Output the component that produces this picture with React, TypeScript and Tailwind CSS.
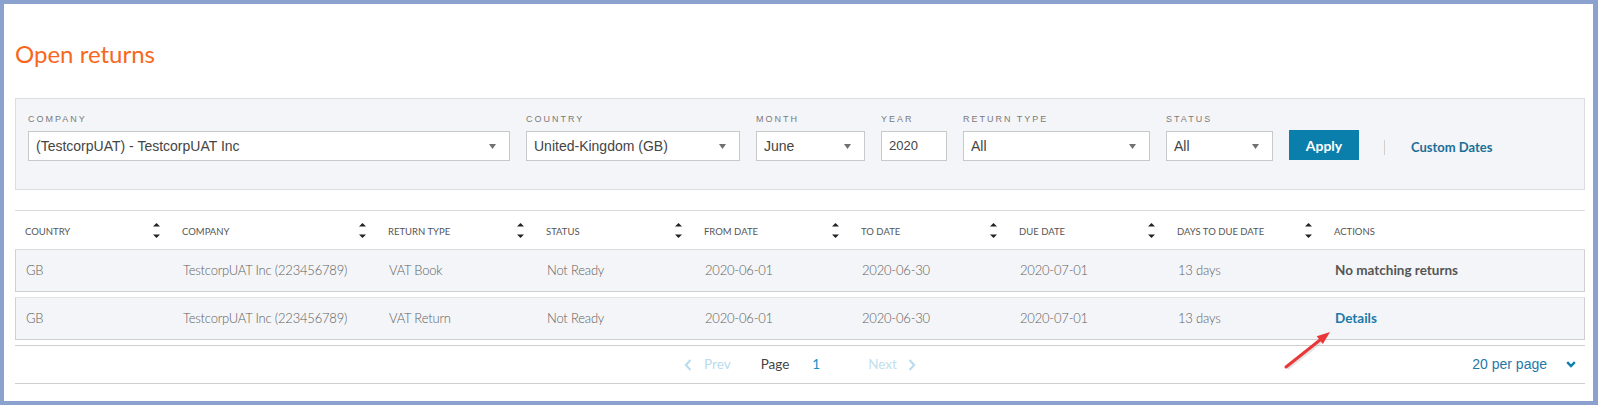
import React from "react";

const Caret = () => (
  <svg width="7" height="5" viewBox="0 0 7 5" className="shrink-0">
    <path d="M0 0h7L3.5 5z" fill="#707070" />
  </svg>
);

const SortIcon = () => (
  <svg width="7" height="15" viewBox="0 0 7 15" className="shrink-0">
    <path d="M3.5 0L7 3.6H0z" fill="#222" />
    <path d="M0 11.4h7L3.5 15z" fill="#222" />
  </svg>
);

const labelCls =
  "mb-[6px] h-[12px] text-[9px] leading-[12px] tracking-[2px] text-[#7a7a7a] uppercase";
const boxCls =
  "flex h-[30px] items-center justify-between border border-[#c9c9c9] bg-white pl-[7px] pr-[13px] text-[14px] text-[#444]";

const headers = [
  "Country",
  "Company",
  "Return Type",
  "Status",
  "From Date",
  "To Date",
  "Due Date",
  "Days to due date",
];

const rows = [
  ["GB", "TestcorpUAT Inc (223456789)", "VAT Book", "Not Ready", "2020-06-01", "2020-06-30", "2020-07-01", "13 days"],
  ["GB", "TestcorpUAT Inc (223456789)", "VAT Return", "Not Ready", "2020-06-01", "2020-06-30", "2020-07-01", "13 days"],
];

const gridCls =
  "grid grid-cols-[157px_206px_158px_158px_157px_158px_158px_157px_1fr] items-center";

export default function App() {
  return (
    <div className="relative h-[405px] w-[1598px] overflow-hidden border-t-4 border-l-4 border-b-4 border-r-[5px] border-[#8ba2ce] bg-white font-['Lato',sans-serif]">
      <div className="pl-[11px] pr-[8px] pt-[35px]">
        <h1 className="text-[24px] leading-[30px] font-normal text-[#f7681d]">Open returns</h1>

        {/* Filter panel */}
        <div className="mt-[29px] h-[92px] border border-[#dcdde0] bg-[#f4f5f8] pl-[12px] pt-[14px] font-['Liberation_Sans',Arial,sans-serif]">
          <div className="flex items-end gap-4">
            <div className="flex w-[482px] flex-col">
              <div className={labelCls}>Company</div>
              <div className={boxCls}>
                <span>(TestcorpUAT) - TestcorpUAT Inc</span>
                <Caret />
              </div>
            </div>
            <div className="flex w-[214px] flex-col">
              <div className={labelCls}>Country</div>
              <div className={boxCls}>
                <span>United-Kingdom (GB)</span>
                <Caret />
              </div>
            </div>
            <div className="flex w-[109px] flex-col">
              <div className={labelCls}>Month</div>
              <div className={boxCls}>
                <span>June</span>
                <Caret />
              </div>
            </div>
            <div className="flex w-[66px] flex-col">
              <div className={labelCls}>Year</div>
              <div className={boxCls}>
                <span className="text-[13px]">2020</span>
              </div>
            </div>
            <div className="flex w-[187px] flex-col">
              <div className={labelCls}>Return Type</div>
              <div className={boxCls}>
                <span>All</span>
                <Caret />
              </div>
            </div>
            <div className="flex w-[107px] flex-col">
              <div className={labelCls}>Status</div>
              <div className={boxCls}>
                <span>All</span>
                <Caret />
              </div>
            </div>
            <button className="mb-[1px] h-[30px] w-[70px] bg-[#0b7fab] font-['Lato',sans-serif] text-[14px] font-bold text-white">
              Apply
            </button>
            <div className="flex h-[30px] items-center pt-[3px] font-['Lato',sans-serif]">
              <div className="ml-[9px] h-[15px] w-px bg-[#d5d0cc]" />
              <span className="ml-[26px] text-[13px] font-bold text-[#1c6e95]">Custom Dates</span>
            </div>
          </div>
        </div>

        {/* Table */}
        <div className="mt-[20px]">
          <div className={`${gridCls} h-[40px] border-t border-b border-[#dcdcdc]`}>
            {headers.map((h) => (
              <div key={h} className="flex items-center justify-between pl-[10px] pr-[12px]">
                <span className="pt-[4px] text-[9.5px] uppercase text-[#555]">{h}</span>
                <SortIcon />
              </div>
            ))}
            <div className="pl-[10px] pt-[4px] text-[9.5px] uppercase text-[#555]">Actions</div>
          </div>

          {rows.map((r, i) => (
            <div
              key={i}
              className={`${gridCls} ${
                i === 0 ? "h-[42px] border-b" : "mt-[5px] h-[43px] border-t border-b"
              } border-x border-[#d0d0d0] border-t-[#e3e4e6] bg-[#f4f5f8]`}
            >
              {r.map((c, j) => (
                <div key={j} className="pl-[10px] text-[13px] font-light tracking-[-0.2px] text-[#606060]">
                  {c}
                </div>
              ))}
              <div className="pb-[3px] pl-[10px]">
                {i === 0 ? (
                  <span className="text-[13.5px] font-bold text-[#555]">No matching returns</span>
                ) : (
                  <span className="text-[13.5px] font-bold text-[#1a7aa8]">Details</span>
                )}
              </div>
            </div>
          ))}

          {/* Pagination */}
          <div className="mt-[5px] grid h-[39px] grid-cols-[1fr_auto_1fr] items-center border-t border-b border-[#cfcfcf]">
            <div />
            <div className="flex items-center text-[13.5px]">
              <svg width="8" height="12" viewBox="0 0 8 12">
                <path d="M6.5 1L1.8 6l4.7 5" stroke="#b7dbea" strokeWidth="2" fill="none" />
              </svg>
              <span className="ml-[12px] text-[#b9dbea]">Prev</span>
              <span className="ml-[30px] text-[#444]">Page</span>
              <span className="ml-[23px] text-[#1193c8]">1</span>
              <span className="ml-[48px] text-[#c2e0ed]">Next</span>
              <svg width="8" height="12" viewBox="0 0 8 12" className="ml-[11px]">
                <path d="M1.5 1l4.7 5-4.7 5" stroke="#b7dbea" strokeWidth="2" fill="none" />
              </svg>
            </div>
            <div className="flex items-center justify-self-end pr-[9px]">
              <span className="font-['Liberation_Sans',Arial,sans-serif] text-[14px] text-[#1f78aa]">20 per page</span>
              <svg width="10" height="7" viewBox="0 0 10 7" className="ml-[19px]">
                <path d="M1.2 1.2L5 5l3.8-3.8" stroke="#0b7fab" strokeWidth="2.4" fill="none" />
              </svg>
            </div>
          </div>
        </div>
      </div>

      {/* Red annotation arrow */}
      <svg
        width="56"
        height="48"
        viewBox="0 0 56 48"
        className="absolute left-[1276px] top-[322px]"
      >
        <line x1="6" y1="41" x2="40" y2="14" stroke="#b0b0b0" strokeOpacity="0.35" strokeWidth="4" transform="translate(1 1.5)" />
        <line x1="6" y1="41" x2="40" y2="14" stroke="#e8393a" strokeWidth="3" strokeLinecap="round" />
        <path d="M50 6L42.9 18L36.7 10.2Z" fill="#e8393a" />
      </svg>
    </div>
  );
}
